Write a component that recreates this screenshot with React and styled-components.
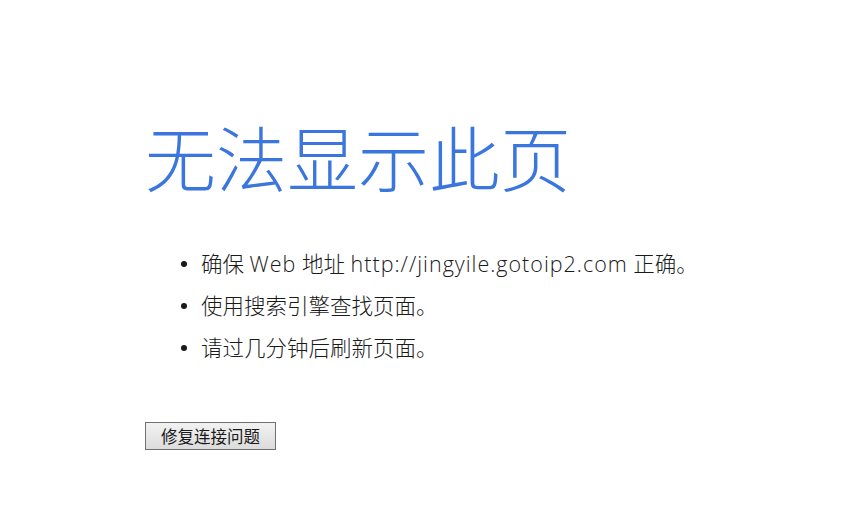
import styled, { createGlobalStyle } from "styled-components";

const GlobalStyle = createGlobalStyle`
    body {
        margin: 0;
        background: #ffffff;
        font-family: "Noto Sans CJK SC", "Noto Sans", sans-serif;
    }
`;

export default function App() {
    return (
        <>
            <GlobalStyle />
            <Page>
                <Title>无法显示此页</Title>
                <TipList>
                    <Tip>确保 <Latin>Web</Latin> 地址 <Latin>http://jingyile.gotoip2.com</Latin> 正确。</Tip>
                    <Tip>使用搜索引擎查找页面。</Tip>
                    <Tip>请过几分钟后刷新页面。</Tip>
                </TipList>
                <FixButton>修复连接问题</FixButton>
            </Page>
        </>
    );
}

const Page = styled.div`
    width: 843px;
    height: 530px;
    box-sizing: border-box;
    padding: 105px 0 0 145px;
    display: flex;
    flex-direction: column;
    align-items: flex-start;
`;

const Title = styled.h1`
    margin: 0;
    font-family: "Noto Sans CJK SC", sans-serif;
    font-weight: 300;
    font-size: 71px;
    line-height: 100px;
    color: #3b76de;
`;

const TipList = styled.ul`
    margin: 38px 0 0 0;
    padding: 0 0 0 56px;
    list-style: none;
    display: flex;
    flex-direction: column;
`;

const Tip = styled.li`
    position: relative;
    font-family: "Open Sans", "Noto Sans CJK SC", sans-serif;
    font-weight: 300;
    font-size: 21.5px;
    line-height: 42px;
    color: #1a1a1a;
    &::before {
        content: "";
        position: absolute;
        left: -20px;
        top: 18px;
        width: 6px;
        height: 6px;
        border-radius: 50%;
        background: #1a1a1a;
    }
`;

const Latin = styled.span`
    letter-spacing: 1px;
`;

const FixButton = styled.button`
    margin-top: 53px;
    width: 131px;
    height: 28px;
    padding: 0;
    font-family: "Noto Sans CJK SC", sans-serif;
    font-size: 16.5px;
    line-height: 26px;
    color: #1a1a1a;
    background: linear-gradient(#f2f2f2, #dcdcdc);
    border: 1px solid #707070;
    border-radius: 0;
`;
